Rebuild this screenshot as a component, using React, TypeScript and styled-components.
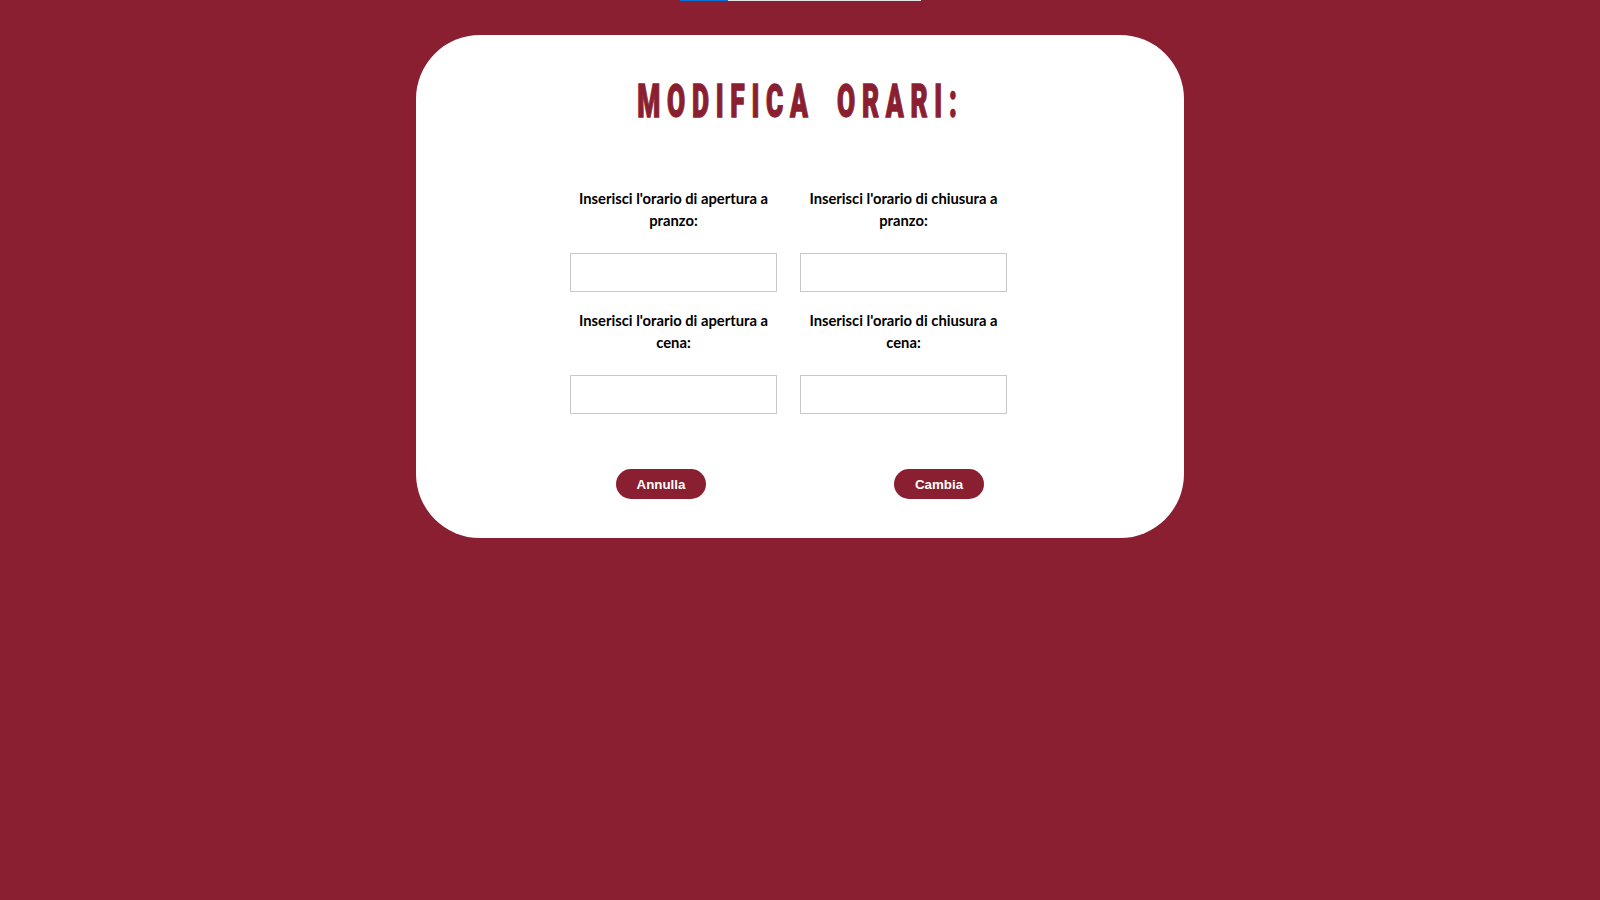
import React from "react";
import styled, { createGlobalStyle } from "styled-components";

const GlobalStyle = createGlobalStyle`
  html, body {
    margin: 0;
    padding: 0;
    background: #891f31;
  }
  body {
    font-family: "Lato", "Liberation Sans", sans-serif;
  }
`;

const Page = styled.div`
  position: relative;
  min-height: 900px;
  background: #891f31;
  padding-top: 35px;
  box-sizing: border-box;
`;

const TopStrip = styled.div`
  position: absolute;
  top: 0;
  left: 680px;
  width: 241px;
  height: 1px;
  background: linear-gradient(to right, #0b6fd1 0 48px, #e4e4e4 48px 100%);
`;

const Card = styled.div`
  width: 768px;
  margin: 0 auto;
  background: #ffffff;
  border-radius: 64px;
  padding: 41px 0 39px;
  box-sizing: border-box;
  display: flex;
  flex-direction: column;
  align-items: center;
`;

const TitleWrap = styled.h1`
  margin: 0 0 62px;
  height: 49px;
  text-align: center;
  width: 100%;
`;

const Title = styled.span`
  display: inline-block;
  font-family: "Roboto", "Liberation Sans", sans-serif;
  font-weight: 900;
  font-size: 47px;
  line-height: 49px;
  letter-spacing: 12px;
  word-spacing: 16px;
  color: #891f31;
  -webkit-text-stroke: 1.4px #891f31;
  transform: scaleX(0.56);
  transform-origin: center;
  white-space: nowrap;
`;

const FormGrid = styled.div`
  display: grid;
  grid-template-columns: 207px 207px;
  column-gap: 23px;
  padding-right: 23px;
`;

const Field = styled.div`
  display: flex;
  flex-direction: column;
  align-items: center;
  padding-bottom: 17px;
`;

const Label = styled.label`
  display: block;
  width: 207px;
  height: 44px;
  margin-bottom: 22px;
  font-family: "Lato", "Liberation Sans", sans-serif;
  font-weight: 700;
  font-size: 14.75px;
  line-height: 22px;
  text-align: center;
  color: #000;
`;

const TimeInput = styled.input`
  display: block;
  width: 207px;
  height: 39px;
  box-sizing: border-box;
  border: 1px solid #c8c8c8;
  background: #fff;
  padding: 0 8px;
  margin: 0;
  font-family: "Lato", sans-serif;
  font-size: 15px;
  outline: none;
`;

const Buttons = styled.div`
  display: flex;
  justify-content: center;
  gap: 188px;
  margin-top: 38px;
`;

const Button = styled.button`
  width: 90px;
  height: 30px;
  border: none;
  border-radius: 15px;
  background: #891f31;
  color: #fff;
  font-family: "Liberation Sans", Arial, sans-serif;
  font-weight: 700;
  font-size: 13.333px;
  cursor: pointer;
  padding: 0;
`;

const fields = [
  { id: "apPranzo", label: "Inserisci l'orario di apertura a pranzo:" },
  { id: "chPranzo", label: "Inserisci l'orario di chiusura a pranzo:" },
  { id: "apCena", label: "Inserisci l'orario di apertura a cena:" },
  { id: "chCena", label: "Inserisci l'orario di chiusura a cena:" },
];

export default function App() {
  return (
    <>
      <GlobalStyle />
      <Page>
        <TopStrip />
        <Card>
          <TitleWrap>
            <Title>MODIFICA ORARI:</Title>
          </TitleWrap>
          <FormGrid>
            {fields.map((f) => (
              <Field key={f.id}>
                <Label htmlFor={f.id}>{f.label}</Label>
                <TimeInput id={f.id} type="text" />
              </Field>
            ))}
          </FormGrid>
          <Buttons>
            <Button type="button">Annulla</Button>
            <Button type="button">Cambia</Button>
          </Buttons>
        </Card>
      </Page>
    </>
  );
}
